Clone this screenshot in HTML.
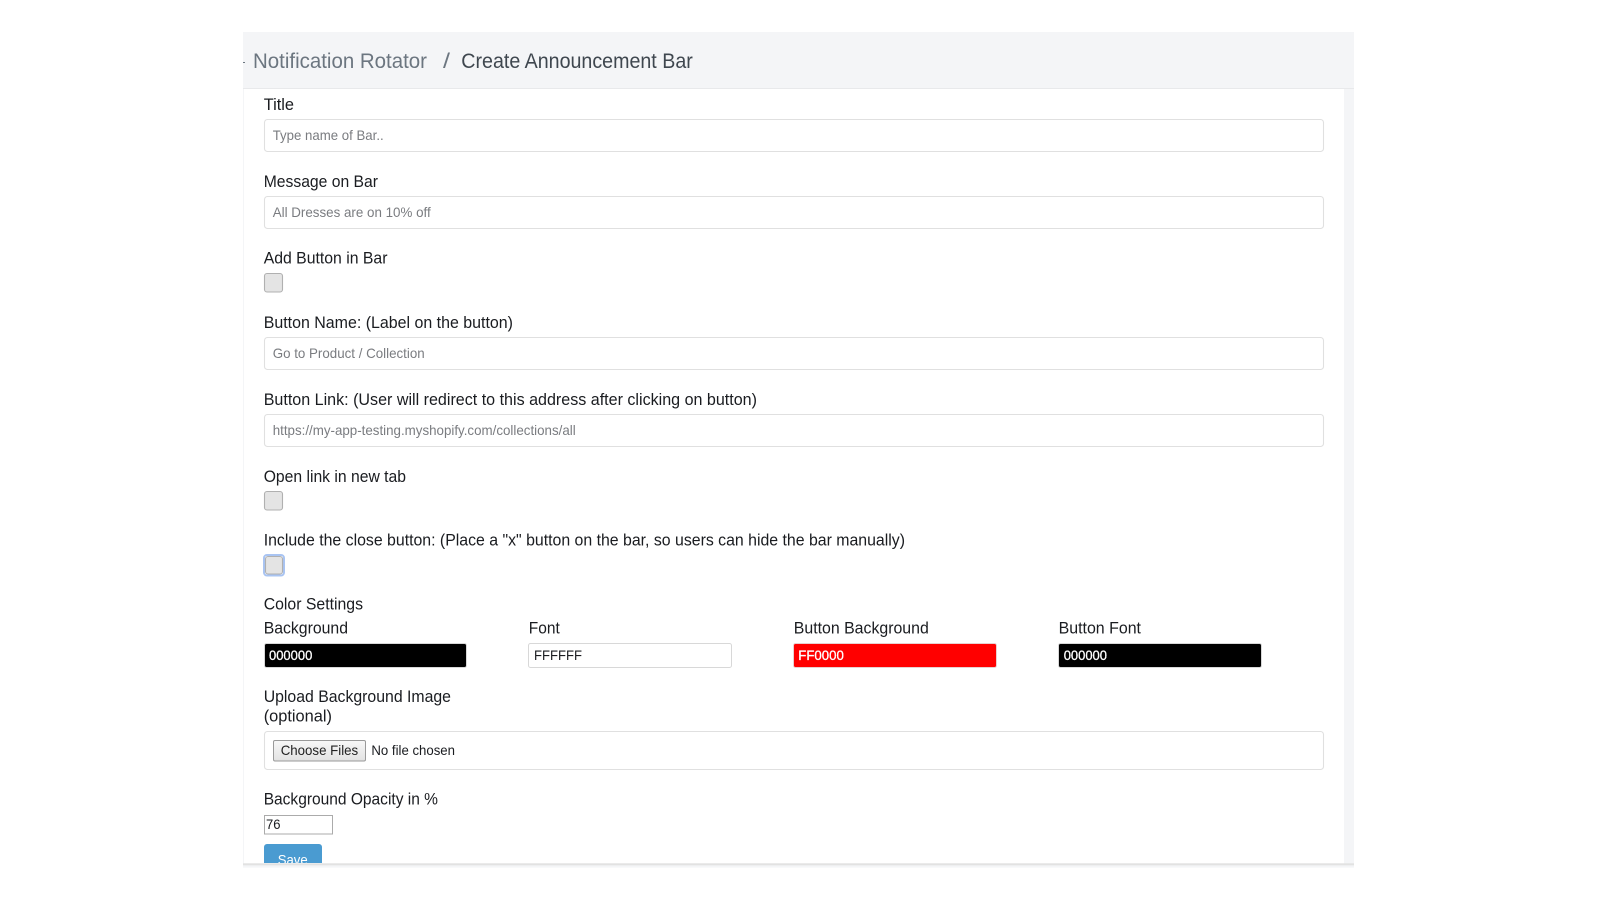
<!DOCTYPE html>
<html lang="en">
<head>
<meta charset="utf-8">
<title>Create Announcement Bar</title>
<style>
html,body{margin:0;padding:0;background:#fff;width:1600px;height:900px;overflow:hidden}
svg{display:block}
text{font-family:"Liberation Sans",Arial,sans-serif}
.l{font-size:16.4px;fill:#1a1c20}
.p{font-size:13.8px;fill:#7a7c80}
.v{font-size:14.2px;fill:#fff;stroke:#fff;stroke-width:.3}
.box{fill:#fff;stroke:#e0e0e0;stroke-width:1.1}
.cb{fill:#e4e4e4;stroke:#b0b0b0;stroke-width:1.1}
</style>
</head>
<body>
<svg width="1600" height="900" viewBox="0 0 1600 900" xmlns="http://www.w3.org/2000/svg">
<defs>
<clipPath id="c"><rect x="243" y="32" width="1111" height="831"/></clipPath>
<linearGradient id="btn" x1="0" y1="0" x2="0" y2="1"><stop offset="0" stop-color="#f8f8f8"/><stop offset="1" stop-color="#e2e2e2"/></linearGradient>
</defs>
<!-- panel -->
<rect x="243" y="32" width="1" height="835" fill="#f4f5f7"/>
<rect x="1344" y="88" width="10" height="779" fill="#f4f5f7"/>
<rect x="243" y="32" width="1111" height="56" fill="#f4f5f7"/>
<rect x="243" y="88" width="1111" height="1" fill="#e8e9eb"/>
<rect x="243" y="865" width="1111" height="2.6" fill="#f4f5f7"/>
<rect x="243" y="863.3" width="1111" height="2" fill="#e2e2e2"/>

<!-- breadcrumb -->
<rect x="243" y="62" width="2" height="1" fill="#6c7680"/>
<text x="253" y="68" font-size="21" fill="#6c7680" textLength="174" lengthAdjust="spacingAndGlyphs">Notification Rotator</text>
<text x="443" y="68" font-size="21" fill="#6c7680" textLength="7" lengthAdjust="spacingAndGlyphs">/</text>
<text x="461.3" y="68" font-size="21" fill="#3f474f" textLength="231.5" lengthAdjust="spacingAndGlyphs">Create Announcement Bar</text>

<!-- Title -->
<text class="l" x="263.7" y="109.8" textLength="30.3" lengthAdjust="spacingAndGlyphs">Title</text>
<rect class="box" x="264.5" y="119.5" width="1059" height="32" rx="3"/>
<text class="p" x="272.7" y="140" textLength="111" lengthAdjust="spacingAndGlyphs">Type name of Bar..</text>

<!-- Message -->
<text class="l" x="263.7" y="186.8" textLength="114.3" lengthAdjust="spacingAndGlyphs">Message on Bar</text>
<rect class="box" x="264.5" y="196.5" width="1059" height="32" rx="3"/>
<text class="p" x="272.7" y="217" textLength="158" lengthAdjust="spacingAndGlyphs">All Dresses are on 10% off</text>

<!-- Add button -->
<text class="l" x="263.7" y="263.6" textLength="123.8" lengthAdjust="spacingAndGlyphs">Add Button in Bar</text>
<rect class="cb" x="264.5" y="273.5" width="18" height="18.5" rx="2.5"/>

<!-- Button name -->
<text class="l" x="263.7" y="327.8" textLength="249.3" lengthAdjust="spacingAndGlyphs">Button Name: (Label on the button)</text>
<rect class="box" x="264.5" y="337.5" width="1059" height="32" rx="3"/>
<text class="p" x="272.7" y="358" textLength="152" lengthAdjust="spacingAndGlyphs">Go to Product / Collection</text>

<!-- Button link -->
<text class="l" x="263.7" y="404.8" textLength="493.3" lengthAdjust="spacingAndGlyphs">Button Link: (User will redirect to this address after clicking on button)</text>
<rect class="box" x="264.5" y="414.5" width="1059" height="32" rx="3"/>
<text class="p" x="272.7" y="435" textLength="303" lengthAdjust="spacingAndGlyphs">https://my-app-testing.myshopify.com/collections/all</text>

<!-- Open link -->
<text class="l" x="263.7" y="481.8" textLength="142.3" lengthAdjust="spacingAndGlyphs">Open link in new tab</text>
<rect class="cb" x="264.5" y="491.5" width="18" height="18.5" rx="2.5"/>

<!-- Close -->
<text class="l" x="263.7" y="545.6" textLength="641.3" lengthAdjust="spacingAndGlyphs">Include the close button: (Place a "x" button on the bar, so users can hide the bar manually)</text>
<rect x="264" y="555" width="20" height="20.5" rx="3" fill="none" stroke="#a9c4f2" stroke-width="2"/>
<rect class="cb" x="265.5" y="556.5" width="17" height="17.5" rx="2.5"/>

<!-- Colours -->
<text class="l" x="263.7" y="609.6" textLength="99.3" lengthAdjust="spacingAndGlyphs">Color Settings</text>
<text class="l" x="263.7" y="633.6" textLength="84.3" lengthAdjust="spacingAndGlyphs">Background</text>
<text class="l" x="528.8" y="633.6" textLength="31" lengthAdjust="spacingAndGlyphs">Font</text>
<text class="l" x="793.8" y="633.6" textLength="135" lengthAdjust="spacingAndGlyphs">Button Background</text>
<text class="l" x="1058.6" y="633.6" textLength="82.4" lengthAdjust="spacingAndGlyphs">Button Font</text>

<rect x="264.5" y="643.5" width="202" height="24" rx="2" fill="#000" stroke="#d8d8d8"/>
<text class="v" x="269" y="660" textLength="43.3" lengthAdjust="spacingAndGlyphs">000000</text>
<rect x="528.5" y="643.5" width="203" height="24" rx="2" fill="#fff" stroke="#d8d8d8"/>
<text x="534" y="660" font-size="14.2" fill="#1a1c20" textLength="48" lengthAdjust="spacingAndGlyphs">FFFFFF</text>
<rect x="793.5" y="643.5" width="203" height="24" rx="2" fill="#f00" stroke="#e8d0d0"/>
<text class="v" x="798.3" y="660" textLength="45.5" lengthAdjust="spacingAndGlyphs">FF0000</text>
<rect x="1058.5" y="643.5" width="203" height="24" rx="2" fill="#000" stroke="#d8d8d8"/>
<text class="v" x="1063.7" y="660" textLength="43.3" lengthAdjust="spacingAndGlyphs">000000</text>

<!-- Upload -->
<text class="l" x="263.7" y="702" textLength="187.3" lengthAdjust="spacingAndGlyphs">Upload Background Image</text>
<text class="l" x="263.7" y="721.6" textLength="68.3" lengthAdjust="spacingAndGlyphs">(optional)</text>
<rect class="box" x="264.5" y="731.5" width="1059" height="38" rx="3"/>
<rect x="273.5" y="740.5" width="92" height="20.5" rx="1.5" fill="url(#btn)" stroke="#9a9a9a"/>
<text x="280.7" y="755" font-size="13.6" fill="#222" textLength="77.5" lengthAdjust="spacingAndGlyphs">Choose Files</text>
<text x="371.4" y="755" font-size="13.6" fill="#1a1c20" textLength="83.6" lengthAdjust="spacingAndGlyphs">No file chosen</text>

<!-- Opacity -->
<text class="l" x="263.7" y="804.6" textLength="174.3" lengthAdjust="spacingAndGlyphs">Background Opacity in %</text>
<rect x="264.5" y="815.5" width="68" height="18.5" fill="#fff" stroke="#ababab"/>
<text x="266" y="829" font-size="13.6" fill="#1a1c20" textLength="14.5" lengthAdjust="spacingAndGlyphs">76</text>

<!-- Save -->
<g clip-path="url(#c)">
<rect x="264" y="844" width="58" height="34" rx="3" fill="#4a9bd1"/>
<text x="277.7" y="864.5" font-size="14" fill="#fff" textLength="30" lengthAdjust="spacingAndGlyphs">Save</text>
</g>
</svg>
</body>
</html>
